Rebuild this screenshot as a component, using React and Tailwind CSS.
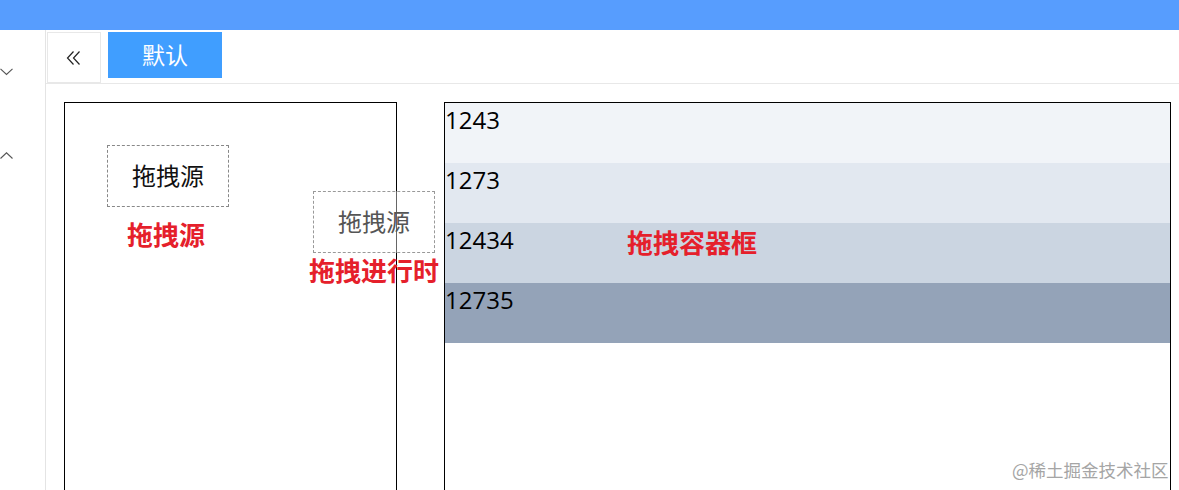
export default function App() {
  const rows = [
    { n: "1243", c: "bg-[#f1f4f8]" },
    { n: "1273", c: "bg-[#e2e8f0]" },
    { n: "12434", c: "bg-[#cbd5e1]" },
    { n: "12735", c: "bg-[#94a3b8]" },
  ];
  const font = { fontFamily: '"Open Sans","Noto Sans CJK SC",sans-serif' };
  return (
    <div className="relative w-[1179px] h-[490px] overflow-hidden bg-white text-black" style={font}>
      <div className="h-[30px] bg-[#579dfe]" />
      <div className="flex h-[460px]">
        <div className="relative w-[46px] border-r border-[#e4e4e4] shrink-0">
          <svg className="absolute left-0 top-[38px]" width="14" height="8" viewBox="0 0 14 8">
            <polyline points="0.5,0.8 6.5,6.5 12.5,0.8" fill="none" stroke="#555" strokeWidth="1.1" />
          </svg>
          <svg className="absolute left-0 top-[122px]" width="14" height="8" viewBox="0 0 14 8">
            <polyline points="0.5,6.5 6.5,0.8 12.5,6.5" fill="none" stroke="#555" strokeWidth="1.1" />
          </svg>
        </div>
        <div className="flex-1 flex flex-col">
          <div className="h-[54px] border-b border-[#e8e8e8] flex items-start pt-[2px] pl-[1px]">
            <div className="w-[54px] h-[51px] border border-[#e8e8e8] flex items-center justify-center">
              <svg width="16" height="14" viewBox="0 0 16 14">
                <polyline points="7.5,0.5 1.5,7 7.5,13.5" fill="none" stroke="#222" strokeWidth="1.2" />
                <polyline points="13.5,0.5 7.5,7 13.5,13.5" fill="none" stroke="#222" strokeWidth="1.2" />
              </svg>
            </div>
            <div className="ml-[7px] w-[114px] h-[46px] bg-[#409eff] text-white text-[23px] font-normal flex items-center justify-center">
              默认
            </div>
          </div>
          <div className="flex pt-[18px] pl-[18px] gap-[47px]">
            <div className="relative w-[333px] h-[400px] border border-black shrink-0">
              <div className="ml-[42px] mt-[42px] w-[122px] h-[62px] border border-dashed border-[#888] flex items-center justify-center text-[24px] text-[#111]">
                拖拽源
              </div>
              <div className="ml-[62px] mt-[12px] text-[26px] font-bold text-[#e5202b] leading-[32px]">拖拽源</div>
            </div>
            <div className="relative w-[727px] h-[400px] border border-black shrink-0">
              {rows.map((r) => (
                <div key={r.n} className={`h-[60px] ${r.c} text-[24px] leading-[34px]`}>
                  {r.n}
                </div>
              ))}
              <div className="absolute left-[182px] top-[124px] text-[26px] font-bold text-[#e5202b] leading-[32px] whitespace-nowrap">
                拖拽容器框
              </div>
            </div>
          </div>
        </div>
      </div>
      <div className="absolute left-[313px] top-[191px] w-[122px] h-[62px] border border-dashed border-[#999] bg-white/40 flex items-center justify-center text-[24px] text-[#555]">
        拖拽源
      </div>
      <div className="absolute left-[309px] top-[255px] text-[26px] font-bold text-[#e5202b] leading-[32px] whitespace-nowrap">
        拖拽进行时
      </div>
      <div className="absolute left-[1012px] top-[457px] text-[17.5px] text-[#a5a5a5] whitespace-nowrap" style={{ fontFamily: '"Noto Sans CJK SC",sans-serif' }}>
        @稀土掘金技术社区
      </div>
    </div>
  );
}
